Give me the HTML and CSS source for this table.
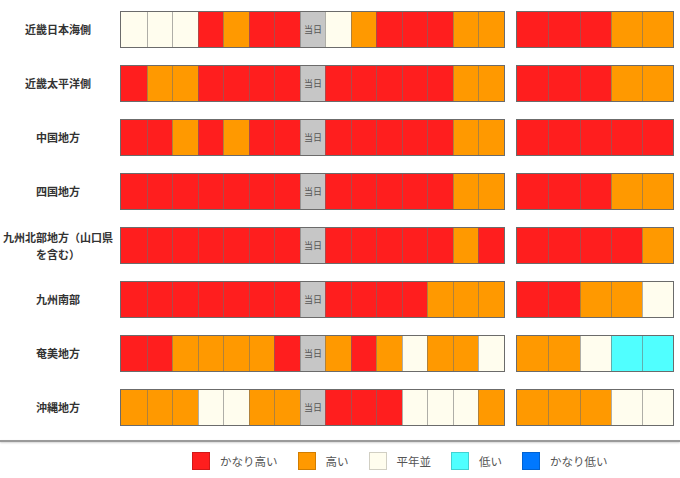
FILE: index.html
```html
<!DOCTYPE html>
<html lang="ja">
<head>
<meta charset="utf-8">
<title>2週間気温予報</title>
<link rel="stylesheet" href="styles.css">
</head>
<body>
<div class="table">
  <div class="row">
    <div class="label">近畿日本海側</div>
    <div class="bar main"><i class="w"></i><i class="w"></i><i class="w"></i><i class="r"></i><i class="o"></i><i class="r"></i><i class="r"></i><i class="today">当日</i><i class="w"></i><i class="o"></i><i class="r"></i><i class="r"></i><i class="r"></i><i class="o"></i><i class="o"></i></div>
    <div class="bar ext"><i class="r"></i><i class="r"></i><i class="r"></i><i class="o"></i><i class="o"></i></div>
  </div>
  <div class="row">
    <div class="label">近畿太平洋側</div>
    <div class="bar main"><i class="r"></i><i class="o"></i><i class="o"></i><i class="r"></i><i class="r"></i><i class="r"></i><i class="r"></i><i class="today">当日</i><i class="r"></i><i class="r"></i><i class="r"></i><i class="r"></i><i class="r"></i><i class="o"></i><i class="o"></i></div>
    <div class="bar ext"><i class="r"></i><i class="r"></i><i class="r"></i><i class="o"></i><i class="o"></i></div>
  </div>
  <div class="row">
    <div class="label">中国地方</div>
    <div class="bar main"><i class="r"></i><i class="r"></i><i class="o"></i><i class="r"></i><i class="o"></i><i class="r"></i><i class="r"></i><i class="today">当日</i><i class="r"></i><i class="r"></i><i class="r"></i><i class="r"></i><i class="r"></i><i class="o"></i><i class="o"></i></div>
    <div class="bar ext"><i class="r"></i><i class="r"></i><i class="r"></i><i class="r"></i><i class="r"></i></div>
  </div>
  <div class="row">
    <div class="label">四国地方</div>
    <div class="bar main"><i class="r"></i><i class="r"></i><i class="r"></i><i class="r"></i><i class="r"></i><i class="r"></i><i class="r"></i><i class="today">当日</i><i class="r"></i><i class="r"></i><i class="r"></i><i class="r"></i><i class="r"></i><i class="o"></i><i class="o"></i></div>
    <div class="bar ext"><i class="r"></i><i class="r"></i><i class="r"></i><i class="o"></i><i class="o"></i></div>
  </div>
  <div class="row">
    <div class="label">九州北部地方（山口県<br>を含む）</div>
    <div class="bar main"><i class="r"></i><i class="r"></i><i class="r"></i><i class="r"></i><i class="r"></i><i class="r"></i><i class="r"></i><i class="today">当日</i><i class="r"></i><i class="r"></i><i class="r"></i><i class="r"></i><i class="r"></i><i class="o"></i><i class="r"></i></div>
    <div class="bar ext"><i class="r"></i><i class="r"></i><i class="r"></i><i class="r"></i><i class="o"></i></div>
  </div>
  <div class="row">
    <div class="label">九州南部</div>
    <div class="bar main"><i class="r"></i><i class="r"></i><i class="r"></i><i class="r"></i><i class="r"></i><i class="r"></i><i class="r"></i><i class="today">当日</i><i class="r"></i><i class="r"></i><i class="r"></i><i class="r"></i><i class="o"></i><i class="o"></i><i class="o"></i></div>
    <div class="bar ext"><i class="r"></i><i class="r"></i><i class="o"></i><i class="o"></i><i class="w"></i></div>
  </div>
  <div class="row">
    <div class="label">奄美地方</div>
    <div class="bar main"><i class="r"></i><i class="r"></i><i class="o"></i><i class="o"></i><i class="o"></i><i class="o"></i><i class="r"></i><i class="today">当日</i><i class="o"></i><i class="r"></i><i class="o"></i><i class="w"></i><i class="o"></i><i class="o"></i><i class="w"></i></div>
    <div class="bar ext"><i class="o"></i><i class="o"></i><i class="w"></i><i class="c"></i><i class="c"></i></div>
  </div>
  <div class="row">
    <div class="label">沖縄地方</div>
    <div class="bar main"><i class="o"></i><i class="o"></i><i class="o"></i><i class="w"></i><i class="w"></i><i class="o"></i><i class="o"></i><i class="today">当日</i><i class="r"></i><i class="r"></i><i class="r"></i><i class="w"></i><i class="w"></i><i class="w"></i><i class="o"></i></div>
    <div class="bar ext"><i class="o"></i><i class="o"></i><i class="o"></i><i class="w"></i><i class="w"></i></div>
  </div>
</div>
<div class="divider"></div>
<div class="legend">
  <span class="key"><i class="sw r"></i>かなり高い</span>
  <span class="key"><i class="sw o"></i>高い</span>
  <span class="key"><i class="sw w"></i>平年並</span>
  <span class="key"><i class="sw c"></i>低い</span>
  <span class="key"><i class="sw b"></i>かなり低い</span>
</div>
</body>
</html>
```
FILE: styles.css
```css
html, body {
  margin: 0;
  padding: 0;
  background: #fff;
  font-family: "Noto Sans CJK JP", "Noto Sans", sans-serif;
}
.table {
  display: flex;
  flex-direction: column;
  gap: 17px;
  padding-top: 11px;
}
.row {
  display: flex;
  align-items: center;
  height: 37px;
}
.label {
  width: 116px;
  margin-right: 4px;
  text-align: center;
  font-size: 11px;
  font-weight: bold;
  line-height: 17px;
  color: #333;
  white-space: nowrap;
}
.bar {
  display: grid;
  height: 37px;
  box-sizing: border-box;
  border: 1px solid #6b6b6b;
}
.bar.main {
  width: 385px;
  grid-template-columns: repeat(7, 26px 25px) 26px;
}
.bar.ext {
  width: 158px;
  margin-left: 11px;
  grid-template-columns: 31px 32px 31px 31px 31px;
}
.bar i {
  display: flex;
  align-items: center;
  justify-content: center;
  font-style: normal;
  border-left: 1px solid rgba(110, 110, 110, 0.55);
}
.bar i:first-child {
  border-left: none;
}
.r { background: #ff1e1e; }
.o { background: #ff9900; }
.w { background: #fffdee; }
.c { background: #50ffff; }
.b { background: #0078ff; }
.bar i.today {
  background: #c6c6c6;
  color: #555;
  font-size: 9px;
}
.divider {
  margin-top: 14px;
  height: 2px;
  background: #9a9a9a;
  box-shadow: 0 1px 2px rgba(0, 0, 0, 0.18);
}
.legend {
  display: flex;
  align-items: center;
  gap: 20px;
  padding-left: 192px;
  margin-top: 10px;
  font-size: 11.5px;
  color: #555;
}
.key {
  display: flex;
  align-items: center;
  gap: 10px;
}
.sw {
  display: block;
  width: 18px;
  height: 18px;
  box-sizing: border-box;
  border: 1px solid rgba(0, 0, 0, 0.18);
}
```
